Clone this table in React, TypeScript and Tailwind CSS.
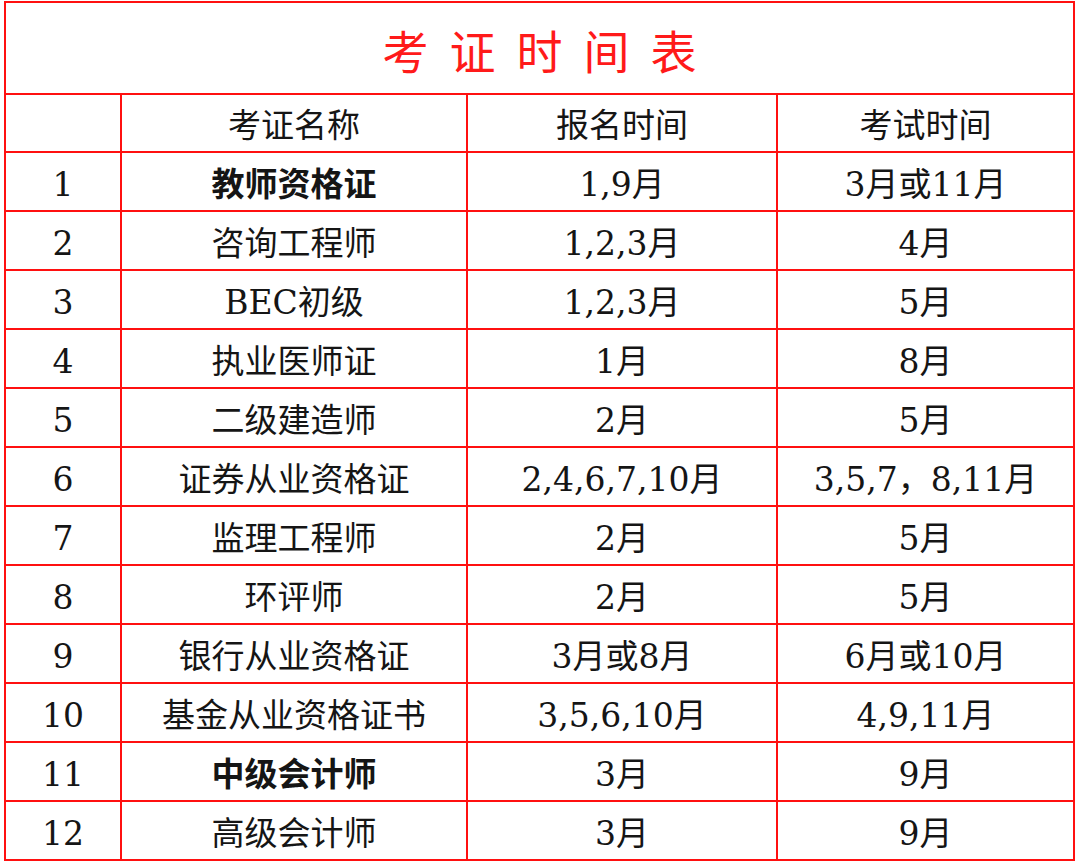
import type { FC } from "react";

type Row = { no: string; name: string; signup: string; exam: string; bold?: boolean };

const rows: Row[] = [
  { no: "1", name: "教师资格证", signup: "1,9月", exam: "3月或11月", bold: true },
  { no: "2", name: "咨询工程师", signup: "1,2,3月", exam: "4月" },
  { no: "3", name: "BEC初级", signup: "1,2,3月", exam: "5月" },
  { no: "4", name: "执业医师证", signup: "1月", exam: "8月" },
  { no: "5", name: "二级建造师", signup: "2月", exam: "5月" },
  { no: "6", name: "证券从业资格证", signup: "2,4,6,7,10月", exam: "3,5,7，8,11月" },
  { no: "7", name: "监理工程师", signup: "2月", exam: "5月" },
  { no: "8", name: "环评师", signup: "2月", exam: "5月" },
  { no: "9", name: "银行从业资格证", signup: "3月或8月", exam: "6月或10月" },
  { no: "10", name: "基金从业资格证书", signup: "3,5,6,10月", exam: "4,9,11月" },
  { no: "11", name: "中级会计师", signup: "3月", exam: "9月", bold: true },
  { no: "12", name: "高级会计师", signup: "3月", exam: "9月" },
];

const cell =
  "bg-white h-[57px] flex items-center justify-center pt-[5px] text-[33px] leading-none text-[#151515] whitespace-nowrap";

const App: FC = () => {
  return (
    <div
      className="w-[1080px] h-[867px] bg-white pt-[1px] pl-[4px]"
      style={{ fontFamily: '"DejaVu Serif", "Noto Sans CJK SC", serif' }}
    >
      <div className="inline-grid grid-cols-[114px_344px_308px_295px] gap-[2px] p-[2px] bg-[#ff1010]">
        {/* 标题 */}
        <div className="col-span-4 bg-white h-[90px] flex items-center justify-center gap-[21px] pt-[2px] text-[46px] leading-none text-[#ff1a1a] font-['Noto_Sans_CJK_SC',sans-serif]">
          {"考证时间表".split("").map((ch) => (
            <span key={ch}>{ch}</span>
          ))}
        </div>

        {/* 表头 */}
        <div className="bg-white h-[56px]" />
        <div className={cell.replace("h-[57px]", "h-[56px]")}>考证名称</div>
        <div className={cell.replace("h-[57px]", "h-[56px]")}>报名时间</div>
        <div className={cell.replace("h-[57px]", "h-[56px]")}>考试时间</div>

        {rows.map((r) => (
          <div key={r.no} className="contents">
            <div className={cell}>{r.no}</div>
            <div className={`${cell} ${r.bold ? "font-bold" : ""}`}>{r.name}</div>
            <div className={cell}>{r.signup}</div>
            <div className={cell}>{r.exam}</div>
          </div>
        ))}
      </div>
    </div>
  );
};

export default App;
